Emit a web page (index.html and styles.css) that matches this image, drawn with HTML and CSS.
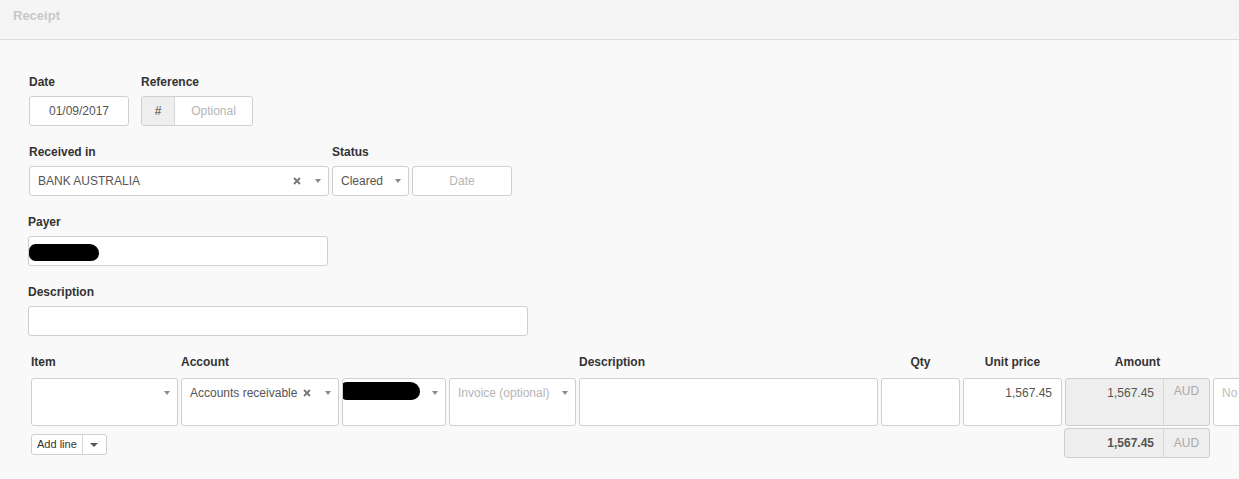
FILE: index.html
```html
<!DOCTYPE html>
<html>
<head>
<meta charset="utf-8">
<link rel="stylesheet" href="styles.css">
</head>
<body>
<div class="header">Receipt</div>
<div class="form">
  <div class="row">
    <div class="group">
      <div class="label">Date</div>
      <div class="box w-date center">01/09/2017</div>
    </div>
    <div class="group gap-ref">
      <div class="label">Reference</div>
      <div class="box w-ref split">
        <span class="addon">#</span>
        <span class="ph center grow">Optional</span>
      </div>
    </div>
  </div>

  <div class="row">
    <div class="group">
      <div class="label">Received in</div>
      <div class="box w-300 sel">
        <span class="val grow">BANK AUSTRALIA</span>
        <svg class="x" width="8" height="8" viewBox="0 0 8 8"><path d="M1 1L7 7M7 1L1 7" stroke="#777" stroke-width="1.8"/></svg>
        <span class="caret"></span>
      </div>
    </div>
    <div class="group gap3">
      <div class="label">Status</div>
      <div class="inline">
        <div class="box w-status sel">
          <span class="val grow">Cleared</span>
          <span class="caret"></span>
        </div>
        <div class="box w-date center ph">Date</div>
      </div>
    </div>
  </div>

  <div class="row shift">
    <div class="group">
      <div class="label">Payer</div>
      <div class="box w-300"><span class="redact redact-payer"></span></div>
    </div>
  </div>

  <div class="row shift">
    <div class="group">
      <div class="label">Description</div>
      <div class="box w-500"></div>
    </div>
  </div>

  <div class="lines">
    <div class="lgrid heads">
      <div class="label">Item</div>
      <div class="label">Account</div>
      <div></div>
      <div></div>
      <div class="label">Description</div>
      <div class="label center">Qty</div>
      <div class="label center">Unit price</div>
      <div class="label center">Amount</div>
      <div></div>
    </div>
    <div class="lgrid cells">
      <div class="cell sel"><span class="grow"></span><span class="caret"></span></div>
      <div class="cell sel"><span class="val grow">Accounts receivable</span>
        <svg class="x" width="8" height="8" viewBox="0 0 8 8"><path d="M1 1L7 7M7 1L1 7" stroke="#777" stroke-width="1.8"/></svg>
        <span class="caret"></span></div>
      <div class="cell sel nopad"><span class="grow"><span class="redact redact-line"></span></span><span class="caret"></span></div>
      <div class="cell sel"><span class="ph grow">Invoice (optional)</span><span class="caret"></span></div>
      <div class="cell"></div>
      <div class="cell"></div>
      <div class="cell right val">1,567.45</div>
      <div class="cell amount"><span class="amt grow">1,567.45</span><span class="cur">AUD</span></div>
      <div class="cell note">No</div>
    </div>
    <div class="footer">
      <div class="addline"><span class="btn-main">Add line</span><span class="btn-caret"><span class="caret dark"></span></span></div>
      <div class="total"><span class="amt grow bold">1,567.45</span><span class="cur">AUD</span></div>
    </div>
  </div>
</div>
</body>
</html>
```
FILE: styles.css
```css
* { box-sizing: border-box; }
html, body { margin: 0; padding: 0; }
body {
  width: 1239px;
  height: 479px;
  overflow: hidden;
  background: #f9f9f9;
  font-family: "Liberation Sans", Arial, sans-serif;
  font-size: 12px;
  color: #333;
}
.header {
  height: 40px;
  background: #f5f5f5;
  border-bottom: 1px solid #dcdcdc;
  padding-left: 13px;
  line-height: 31px;
  font-size: 13px;
  font-weight: bold;
  color: #c8c8c8;
}
.form {
  padding: 34px 0 0 29px;
}
.row {
  display: flex;
  margin-bottom: 18px;
}
.row.shift { margin-left: -1px; }
.group { display: flex; flex-direction: column; }
.gap-ref { margin-left: 12px; }
.gap3 { margin-left: 3px; }
.inline { display: flex; gap: 3px; }
.label {
  font-weight: bold;
  line-height: 16px;
  height: 14px;
  margin-bottom: 8px;
  color: #333;
  white-space: nowrap;
}
.box {
  height: 30px;
  background: #fff;
  border: 1px solid #cfcfcf;
  border-radius: 3px;
  display: flex;
  align-items: center;
  color: #555;
  padding: 0 8px;
  overflow: hidden;
}
.box.sel { padding-right: 7px; }
.center { justify-content: center; text-align: center; }
.w-date { width: 100px; }
.w-ref { width: 112px; }
.w-300 { width: 300px; }
.w-500 { width: 500px; }
.w-status { width: 77px; }
.split { padding: 0; }
.addon {
  width: 33px;
  height: 100%;
  background: #eeeeee;
  border-right: 1px solid #d6d6d6;
  display: flex;
  align-items: center;
  justify-content: center;
  color: #444;
}
.grow { flex: 1; min-width: 0; }
.ph { color: #b5b5b5; }
.val { color: #555; white-space: nowrap; }
.sel .x { margin-right: 14px; flex: none; }
.caret {
  width: 0; height: 0;
  border-left: 3px solid transparent;
  border-right: 3px solid transparent;
  border-top: 4px solid #8a8a8a;
  flex: none;
}
.caret.dark { border-top-color: #555; border-left-width: 4px; border-right-width: 4px; }
.redact {
  display: inline-block;
  background: #000;
  border-radius: 10px 14px 12px 10px;
}
.redact-payer { width: 70px; height: 17px; margin-left: -8px; margin-top: 2px; }
.redact-line { width: 80px; height: 18px; margin-left: -3px; margin-top: -4px; }

.lines { margin-left: 2px; }
.lgrid {
  display: grid;
  grid-template-columns: 147px 158px 104px 127px 299px 79px 99px 145px 160px;
  column-gap: 3px;
}
.heads .label { margin-bottom: 10px; }
.cell {
  height: 48px;
  background: #fff;
  border: 1px solid #cfcfcf;
  border-radius: 3px;
  display: flex;
  align-items: flex-start;
  padding: 7px 8px 0 8px;
  line-height: 14px;
  color: #555;
  overflow: hidden;
  white-space: nowrap;
}
.cell.sel { padding-right: 7px; }
.cell.sel .caret { margin-top: 5px; }
.cell.sel .x { margin-top: 3px; margin-left: 6px; margin-right: 14px; }
.cell.nopad { padding-left: 0; }
.cell.note { color: #c0c0c0; }
.right { justify-content: flex-end; padding-right: 9px; }
.amount { background: #eeeeee; padding: 0; }
.amt { text-align: right; padding: 7px 9px 0 0; color: #555; }
.cur {
  width: 46px;
  height: 100%;
  border-left: 1px solid #d6d6d6;
  color: #aaa;
  text-align: center;
  padding-top: 5px;
}
.footer {
  display: flex;
  justify-content: space-between;
  width: 1179px;
  margin-top: 2px;
}
.addline {
  margin-top: 6px;
  height: 21px;
  display: flex;
  background: #fff;
  border: 1px solid #cfcfcf;
  border-radius: 3px;
  font-size: 11px;
  color: #333;
}
.btn-main { padding: 0 5px; line-height: 19px; border-right: 1px solid #d6d6d6; }
.btn-caret { width: 23px; display: flex; align-items: center; justify-content: center; }
.total {
  width: 146px;
  height: 30px;
  background: #eeeeee;
  border: 1px solid #cfcfcf;
  border-radius: 3px;
  display: flex;
  align-items: center;
}
.total .amt { padding: 0 9px 0 0; }
.total .cur { padding-top: 0; display: flex; align-items: center; justify-content: center; }
.bold { font-weight: bold; }
```
